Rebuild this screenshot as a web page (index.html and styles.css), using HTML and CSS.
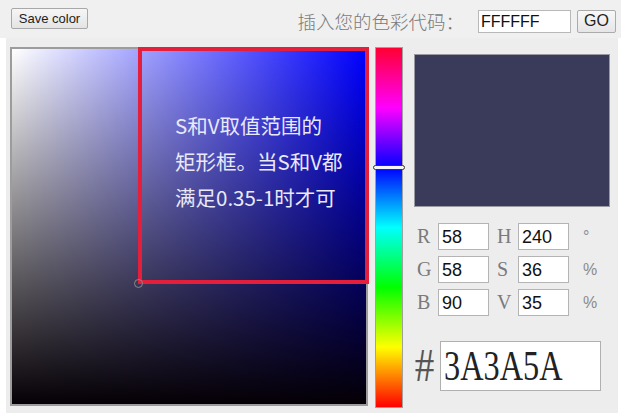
FILE: index.html
```html
<!DOCTYPE html>
<html lang="zh">
<head>
<meta charset="utf-8">
<title>Color picker</title>
<link rel="stylesheet" href="styles.css">
</head>
<body>
<div class="topbar">
  <button class="save-btn">Save color</button>
  <div class="code-entry">
    <span class="code-label">插入您的色彩代码：</span>
    <input class="code-input" value="FFFFFF">
    <button class="go-btn">GO</button>
  </div>
</div>
<div class="panel">
  <div class="sv-wrap">
    <div class="sv"></div>
    <div class="annot"><p>S和V取值范围的<br>矩形框。当S和V都<br>满足0.35-1时才可</p></div>
    <div class="cursor"></div>
  </div>
  <div class="hue-wrap">
    <div class="hue"></div>
    <div class="hue-thumb"></div>
  </div>
  <div class="side">
    <div class="preview"></div>
    <div class="fields">
      <div class="row">
        <span class="lbl">R</span><input class="num" value="58">
        <span class="lbl lbl2">H</span><input class="num" value="240">
        <span class="unit">°</span>
      </div>
      <div class="row">
        <span class="lbl">G</span><input class="num" value="58">
        <span class="lbl lbl2">S</span><input class="num" value="36">
        <span class="unit">%</span>
      </div>
      <div class="row">
        <span class="lbl">B</span><input class="num" value="90">
        <span class="lbl lbl2">V</span><input class="num" value="35">
        <span class="unit">%</span>
      </div>
    </div>
    <div class="hex-row">
      <span class="hash">#</span>
      <div class="hex-box"><span class="hex-text">3A3A5A</span></div>
    </div>
  </div>
</div>
</body>
</html>
```

FILE: styles.css
```css
html, body {
  margin: 0;
  padding: 0;
  background: #ffffff;
  width: 621px;
  height: 420px;
  overflow: hidden;
}

.topbar {
  height: 38px;
  background: #f0f0f0;
  display: flex;
  align-items: center;
  justify-content: space-between;
  padding: 0 5px 0 11px;
  box-sizing: border-box;
}

.save-btn {
  font-family: "Liberation Sans", Arial, sans-serif;
  font-size: 13px;
  color: #222;
  height: 21px;
  width: 77px;
  margin-top: -1px;
  padding: 0;
  background: linear-gradient(#f6f6f6, #e4e4e4);
  border: 1px solid #a8a8a8;
  border-radius: 2px;
}

.code-entry {
  display: flex;
  align-items: center;
  margin-top: 4px;
}

.code-label {
  font-family: "Noto Sans CJK SC", sans-serif;
  font-weight: 300;
  font-size: 18.5px;
  color: #7a7a7a;
  margin-right: 14px;
  line-height: 24px;
}

.code-input {
  font-family: "Liberation Sans", Arial, sans-serif;
  font-size: 16px;
  color: #111;
  width: 93px;
  height: 23px;
  box-sizing: border-box;
  border: 1px solid #b8b8b8;
  background: #fff;
  padding: 2px 2px 0;
  margin: 0;
}

.go-btn {
  font-family: "Liberation Sans", Arial, sans-serif;
  font-size: 16px;
  color: #222;
  width: 39px;
  height: 23px;
  margin-left: 6px;
  padding: 0;
  background: linear-gradient(#f8f8f8, #e6e6e6);
  border: 1px solid #ababab;
  border-radius: 2px;
}

.panel {
  margin: 0 3px 0 6px;
  height: 375px;
  background: #ededed;
  display: flex;
  align-items: flex-start;
  padding: 9px 0 0 4px;
  box-sizing: border-box;
}

.sv-wrap {
  position: relative;
  width: 358px;
  height: 359px;
  flex: none;
}

.sv {
  width: 100%;
  height: 100%;
  box-sizing: border-box;
  border: 2px solid #9c9c9c;
  background:
    linear-gradient(to top, #050005 0%, rgba(0,0,0,0) 100%),
    linear-gradient(to right, #ffffff 0%, #0000ff 100%);
}

.annot {
  position: absolute;
  left: 128px;
  top: 0;
  width: 231px;
  height: 237px;
  box-sizing: border-box;
  border: 4.5px solid #e41f3c;
  padding: 56px 0 0 33px;
}

.annot p {
  margin: 0;
  font-family: "Noto Sans CJK SC", sans-serif;
  font-size: 20.5px;
  line-height: 36px;
  color: #e9e9f7;
  white-space: nowrap;
}

.cursor {
  position: absolute;
  left: 124px;
  top: 232px;
  width: 7px;
  height: 7px;
  border: 1px solid #888;
  border-radius: 50%;
}

.hue-wrap {
  position: relative;
  margin-left: 7px;
  width: 28px;
  height: 361px;
  flex: none;
}

.hue {
  width: 100%;
  height: 100%;
  box-sizing: border-box;
  border: 1px solid #a0a0a0;
  background: linear-gradient(to top,
    #ff0000 0%, #ffff00 16.67%, #00ff00 33.33%, #00ffff 50%,
    #0000ff 66.67%, #ff00ff 83.33%, #ff0033 100%);
}

.hue-thumb {
  position: absolute;
  left: -2px;
  top: 118px;
  width: 32px;
  height: 5px;
  box-sizing: border-box;
  background: #f4f4f4;
  border: 1.5px solid #333;
  border-radius: 3px;
}

.side {
  margin-left: 11px;
  width: 197px;
  display: flex;
  flex-direction: column;
  padding-top: 7px;
}

.preview {
  width: 196px;
  height: 153px;
  box-sizing: border-box;
  background: #3a3a5a;
  border: 1px solid #9a9aa4;
}

.fields {
  margin-top: 16px;
  display: flex;
  flex-direction: column;
  gap: 6px;
}

.row {
  display: flex;
  align-items: center;
  height: 27px;
}

.lbl {
  font-family: "Liberation Serif", "Times New Roman", serif;
  font-size: 20px;
  color: #7a7a7a;
  width: 24px;
  padding-left: 3px;
  box-sizing: border-box;
}

.lbl2 {
  width: 29px;
  padding-left: 8px;
}

.num {
  font-family: "Liberation Sans", Arial, sans-serif;
  font-size: 18px;
  color: #111;
  width: 51px;
  height: 27px;
  box-sizing: border-box;
  border: 1px solid #b4b4b4;
  background: #fff;
  padding: 1px 3px 0;
  margin: 0;
}

.unit {
  font-family: "Liberation Sans", Arial, sans-serif;
  font-size: 16px;
  color: #8a8a8a;
  padding-left: 14px;
}

.hex-row {
  margin-top: 25px;
  display: flex;
  align-items: center;
}

.hash {
  font-family: "Liberation Serif", "Times New Roman", serif;
  font-size: 46px;
  color: #555;
  width: 25px;
  padding-left: 1px;
  line-height: 50px;
  transform: scaleX(0.85);
  transform-origin: left center;
}

.hex-box {
  width: 161px;
  height: 50px;
  box-sizing: border-box;
  border: 1px solid #b0b0b0;
  background: #fff;
  display: flex;
  align-items: center;
  padding-left: 3px;
  overflow: hidden;
}

.hex-text {
  display: inline-block;
  font-family: "Liberation Serif", "Times New Roman", serif;
  font-size: 42px;
  line-height: 48px;
  color: #222;
  transform: scaleX(0.77);
  transform-origin: left center;
  white-space: nowrap;
}
```
